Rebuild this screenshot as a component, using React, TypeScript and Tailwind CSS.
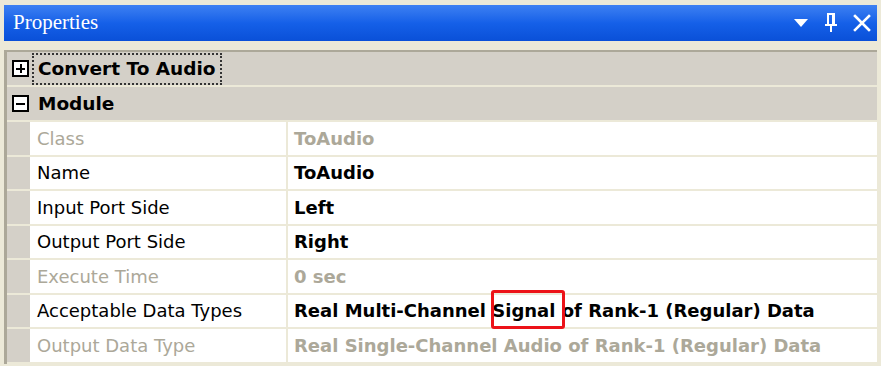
import React from "react";

const rows: { name: string; value: React.ReactNode; disabled?: boolean }[] = [
  { name: "Class", value: "ToAudio", disabled: true },
  { name: "Name", value: "ToAudio" },
  { name: "Input Port Side", value: "Left" },
  { name: "Output Port Side", value: "Right" },
  { name: "Execute Time", value: "0 sec", disabled: true },
  {
    name: "Acceptable Data Types",
    value: (
      <span>
        Real Multi-Channel{" "}
        <span className="relative">
          Signal
          <span className="absolute left-[-1px] right-[-10px] top-[-10px] bottom-[-8px] border-[3px] border-[#ec1218] rounded-[3px]" />
        </span>{" "}
        of Rank-1 (Regular) Data
      </span>
    ),
  },
  { name: "Output Data Type", value: "Real Single-Channel Audio of Rank-1 (Regular) Data", disabled: true },
];

function Box({ minus }: { minus?: boolean }) {
  return (
    <div className="w-[17px] h-[17px] border-[2px] border-black bg-white flex items-center justify-center relative">
      <div className="w-[9px] h-[2px] bg-black" />
      {!minus && <div className="absolute w-[2px] h-[9px] bg-black" />}
    </div>
  );
}

export default function App() {
  const font = { fontFamily: '"DejaVu Sans", Verdana, sans-serif' };
  return (
    <div className="w-[881px] h-[366px] bg-[#ece9d8] overflow-hidden pt-[5px] px-[4px]" style={font}>
      <div className="h-[36px] flex items-center justify-between bg-gradient-to-b from-[#3d80f2] via-[#1560e8] to-[#0a50d8] pl-[9px] pr-[6px]">
        <span className="text-white text-[21px]" style={{ fontFamily: '"Liberation Serif", serif' }}>
          Properties
        </span>
        <div className="flex items-center">
          <svg width="14" height="8" viewBox="0 0 14 8"><path d="M0 0h14L7 8z" fill="white" /></svg>
          <svg className="ml-[17px]" width="12" height="20" viewBox="0 0 12 20" fill="white">
            <rect x="2" y="0" width="8" height="2" />
            <rect x="2" y="0" width="2" height="12" />
            <rect x="7" y="0" width="3" height="12" />
            <rect x="0" y="11" width="12" height="2" />
            <rect x="5" y="13" width="2" height="6" />
          </svg>
          <svg className="ml-[16px]" width="18" height="18" viewBox="0 0 18 18" stroke="white" strokeWidth="2.6" strokeLinecap="square">
            <path d="M2 2L16 16M16 2L2 16" />
          </svg>
        </div>
      </div>
      <div className="h-[11px] border-b-[2px] border-[#aca899]" />
      <div className="bg-[#d4d0c8] border-l-[3px] border-[#aca899] flex flex-col">
        <div className="h-[35px] flex items-center border-b-[2px] border-[#ece9d8]">
          <div className="w-[24px] flex justify-center pl-[3px]"><Box /></div>
          <div className="ml-[1px] px-[4px] h-[32px] flex items-center border-[2px] border-dotted border-[#333] text-[18.5px] font-bold text-black">
            Convert To Audio
          </div>
        </div>
        <div className="h-[35px] flex items-center border-b-[2px] border-[#ece9d8]">
          <div className="w-[24px] flex justify-center pl-[3px]"><Box minus /></div>
          <div className="ml-[7px] text-[18.5px] font-bold text-black">Module</div>
        </div>
        {rows.map((r) => (
          <div key={r.name} className="h-[34.5px] flex border-b-[2px] border-[#ece9d8]">
            <div className="w-[23px] shrink-0" />
            <div
              className={`w-[258px] shrink-0 bg-white border-r-[2px] border-[#ece9d8] pl-[7px] flex items-center text-[18px] ${
                r.disabled ? "text-[#aca899]" : "text-black"
              }`}
            >
              {r.name}
            </div>
            <div
              className={`flex-1 bg-white pl-[6px] flex items-center text-[18px] font-bold ${
                r.disabled ? "text-[#aca899]" : "text-black"
              }`}
            >
              {r.value}
            </div>
          </div>
        ))}
      </div>
    </div>
  );
}
